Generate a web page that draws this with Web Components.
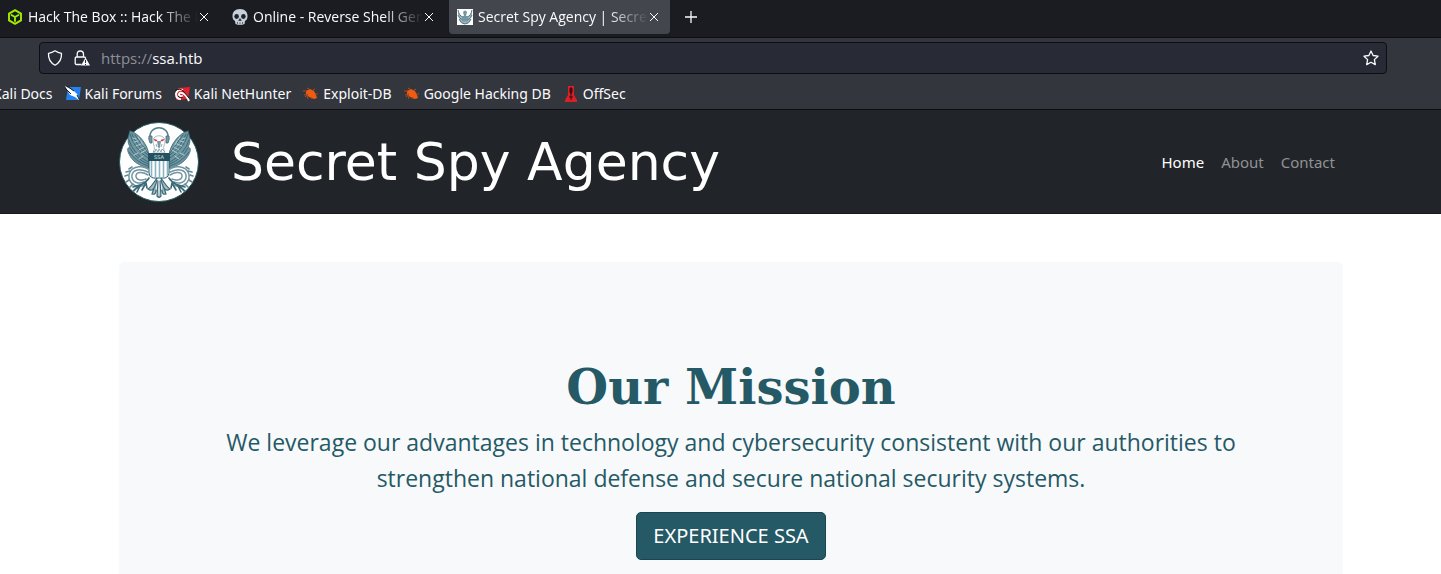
<!DOCTYPE html>
<html lang="en">
<head>
<meta charset="utf-8">
<title>Secret Spy Agency | Secret Security Service</title>
<style>
  body { margin: 0; font-family: "Noto Sans", sans-serif; }
</style>
</head>
<body>
<browser-window></browser-window>

<script>
const eagle = `
  <svg viewBox="0 0 80 80" aria-hidden="true">
    <defs>
      <g id="half" fill="none" stroke="#3a6977" stroke-linecap="round">
        <path d="M11 9C9 15 8 20 11 25C8 26 8 28 10 32C13 39 20 44 30 46V33C29 23 20 11 11 9Z" fill="#6f96a1" stroke-width=".8"/>
        <path d="M11 12Q15 27 29 36M13 12Q18 25 29 33M16 13Q22 21 29 31M10 18Q14 32 29 40M11 26Q17 37 29 42M10 30Q17 40 29 44" stroke-width="1"/>
        <path d="M14 16l3 1M15 20l4-1M17 24l5-2M20 28l5-3M22 31l5-3M15 33l4-2M20 37l4-3M22 19l2 4M19 15l2 3" stroke="#dbe7ea" stroke-width=".7"/>
        <path d="M29 47C20 42 11 46 10 53C9 61 17 67 26 63M29 50C20 46 14 48 13 53C12 59 18 63 25 60M29 53C22 49 17 50 17 54C17 58 22 59 27 57" stroke="#7195a0" stroke-width="1.500" stroke-dasharray="2 .6"/>
        <path d="M13 45l-3 2M11 49l-4 1M9 53l-3 1M10 58l-3 2M14 62l-3 3M18 65l-3 4" stroke="#648b97" stroke-width="1.600"/>
        <path d="M30 56C27 61 21 63 14 69M27 61l-4 7M24 62l-10 3M21 64l-3 6M27 61l1 5" stroke-width="1.600"/>
        <path d="M38 56C34 62 31 66 29 67C32 69 34 68 35 66M38 58C36 65 34 68 33 72C36 73 37 71 37 68M39 59L38 74Q40 76 40 75" fill="#a5bdc4" stroke-width="1.200"/>
      </g>
    </defs>
    <circle cx="40" cy="40" r="39.500" fill="#fff" stroke="#255966"/>
    <use href="#half"/><use href="#half" transform="matrix(-1 0 0 1 80 0)"/>
    <path d="M31 17C29 2 51 2 49 17" fill="none" stroke="#547f8b" stroke-width="1.500"/>
    <path d="M30 14h3v7h-2q-2-4-1-7M50 14h-3v7h2q2-4 1-7" fill="#7899a3" stroke="#3a6977" stroke-width=".8"/>
    <path d="M34 31C37 25 34 23 34 19C34 12 46 12 46 19C46 23 43 25 46 31Z" fill="#fff" stroke="#91a9b0" stroke-width=".8"/>
    <path d="M34 29l2 1 1-3 2 3 1-3 2 3 1-3 3 3M37 22l1 3M43 22l-1 3" fill="none" stroke="#7899a3" stroke-width=".8"/>
    <path d="M38 19h4l-1 6-1 2-1-2Z" fill="#7899a3"/>
    <path d="M35 17l3 1v1h-2zM45 17l-3 1v1h2z" fill="#e03b45" stroke="#e03b45" stroke-width=".4"/>
    <path d="M30 32h20v19q0 4-4 5H34q-4-1-4-5Z" fill="#fff" stroke="#2d5d6b"/>
    <path d="M32.500 39v16M36.500 39v17M40.500 39v17M44.500 39v17M48.500 39v15" stroke="#8ab4c4" stroke-width="1.600"/>
    <path d="M29 31h22v8H29Z" fill="#23515f"/>
    <text x="40" y="37" text-anchor="middle" font-family="DejaVu Sans, sans-serif" font-size="5" fill="#d6e4e8">SSA</text>
  </svg>`;

const icons = {
  cube: `<svg viewBox="0 0 16 16"><path d="M8 1.200L14 4.600V11.400L8 14.800L2 11.400V4.600ZM4.500 6L8 8L11.500 6M8 8V12" fill="none" stroke="#9fef00" stroke-width="1.900" stroke-linejoin="round" stroke-linecap="round"/></svg>`,
  skull: `<svg viewBox="0 0 16 16"><path d="M8 0C3 0 .5 3 .5 7C.5 9 1 11 3 12L3.500 15Q8 17 12.500 15L13 12C15 11 15.500 9 15.500 7C15.500 3 13 0 8 0Z" fill="#c5d0d8"/><ellipse cx="4.600" cy="7.500" rx="2.300" ry="2.400" fill="#1f2228"/><ellipse cx="11.400" cy="7.500" rx="2.300" ry="2.400" fill="#1f2228"/><path d="M8 9.500l-1.300 2h2.600zM5.500 13v2M8 13.200v2.400M10.500 13v2" fill="#1f2228" stroke="#1f2228" stroke-width=".6"/></svg>`,
  seal: `<svg viewBox="0 0 16 16"><path d="M0 0h16v16H0z" fill="#fff"/><path d="M1 1q1 6 5 7v3q-4-1-5-5M15 1q-1 6-5 7v3q4-1 5-5M2 10q2 5 6 5t6-5" fill="#9fb8c0" stroke="#4d7482"/><path d="M6 3q2-3 4 0l-1 4h2v5q-3 1-6 0V7h2z" fill="#7697a2"/></svg>`,
  forums: `<svg viewBox="0 0 16 16"><path d="M3 1h13l-2 13H1z" fill="#2382ef"/><path d="M0 0l9 5 3 3 3 7-5-4-5-2z" fill="#fff"/><path d="M0 2l6 6M2 0l7 5M12 9l3 6" stroke="#17191f" fill="none"/></svg>`,
  hunter: `<svg viewBox="0 0 16 16"><path d="M4 2l12-1-2 12-12 1z" fill="#e4212c"/><path d="M15 15Q12 8 8 7Q5 6 5 9Q6 11 9 10M9 4Q3 3 2 8Q2 13 7 13" fill="none" stroke="#fff" stroke-width="2"/><path d="M1 5q5-4 9 1l5 6M4 10q2 3 5 1" fill="none" stroke="#17191f"/></svg>`,
  bug: `<svg viewBox="0 0 16 16"><path d="M3 5l4-2 4 2 2 4 1 3-3 1-5-2-3-3z" fill="#ee5b12"/><path d="M1 9l4-1-3 3M4 10l1 3M10 4l2-1M12 8l3 0M6 3L4 2M8 11l1 2M0 5h4" fill="none" stroke="#b4481b"/></svg>`,
  offsec: `<svg viewBox="0 0 16 16"><path d="M5 0h6v9l3 5v2H2v-2l3-5z" fill="#dc1f26"/><path d="M7 2h2v4l-1 2-1-2zM8 8v6M6 11h4" fill="#321014" stroke="#321014"/></svg>`
};

function define(name, html, render, observed = []) {
  const template = document.createElement("template");
  template.innerHTML = html;
  customElements.define(name, class extends HTMLElement {
    static observedAttributes = observed;
    constructor() {
      super();
      this.attachShadow({ mode: "open" }).append(template.content.cloneNode(true));
    }
    connectedCallback() { if (render) render(this, this.shadowRoot); }
    attributeChangedCallback() { if (render) render(this, this.shadowRoot); }
  });
}

define("ui-icon", `
  <style>:host { display: block; width: 16px; height: 16px; flex: none; } svg { display: block; width: 16px; height: 16px; }</style>
  <div></div>`, (el, root) => { root.querySelector("div").innerHTML = icons[el.getAttribute("name")] || ""; }, ["name"]);

define("browser-tab", `
  <style>
    :host { display: flex; align-items: center; box-sizing: border-box; width: 221px; height: 34px; padding: 0 8px; gap: 5px; border-radius: 0 0 4px 4px; font: 14px "Open Sans", sans-serif; color: #fbfbfe; }
    :host([selected]) { background: #43464d; }
    .label { flex: 1; min-width: 0; overflow: hidden; white-space: nowrap; line-height: 24px; mask-image: linear-gradient(to left, transparent, #000 40px); }
    button { width: 20px; height: 20px; margin-right: -2px; margin-left: -9px; padding: 5px; border: 0; background: none; color: inherit; }
    svg { display: block; }
  </style>
  <ui-icon></ui-icon>
  <span class="label"><slot></slot></span>
  <button aria-label="Close tab"><svg width="10" height="10" viewBox="0 0 10 10"><path d="M1 1l8 8M9 1L1 9" stroke="currentColor"/></svg></button>
`, (el, root) => root.querySelector("ui-icon").setAttribute("name", el.getAttribute("icon")));

define("tab-strip", `
  <style>
    :host { display: flex; align-items: flex-start; gap: 4px; height: 37px; margin-left: -1px; background: #1b1c21; border-bottom: 1px solid #0d0d12; overflow: hidden; }
    button { width: 34px; height: 34px; padding: 11px; border: 0; background: none; color: #fbfbfe; }
    svg { display: block; }
  </style>
  <slot></slot>
  <button aria-label="New tab"><svg width="12" height="12" viewBox="0 0 12 12"><path d="M6 0v12M0 6h12" stroke="currentColor" stroke-width="1.300"/></svg></button>`);

define("address-bar", `
  <style>
    :host { display: flex; align-items: center; box-sizing: border-box; height: 32px; margin: 4px 54px 4px 39px; padding: 0 7px; border: 1px solid #0d0e14; border-radius: 4px; background: #282a36; color: #fbfbfe; }
    svg { display: block; flex: none; width: 16px; height: 16px; }
    .lock { margin: 0 11px; }
    .field { position: relative; flex: 1; display: flex; height: 24px; font: 15px/24px "Open Sans", sans-serif; }
    input { position: absolute; inset: 0; width: 100%; padding: 0; border: 0; outline: 0; background: none; color: transparent; font: inherit; }
    .url { color: #8f9097; white-space: pre; }
    b { font-weight: 400; color: #fbfbfe; }
    button { padding: 0; border: 0; background: none; color: inherit; }
  </style>
  <svg viewBox="0 0 16 16"><path d="M8 .8Q11 2.800 14.500 3.300Q15 11.500 8 15.200Q1 11.500 1.500 3.300Q5 2.800 8 .8Z" fill="none" stroke="currentColor" stroke-width="1.300" stroke-linejoin="round"/></svg>
  <svg class="lock" viewBox="0 0 16 16"><path d="M7.500 14.500H2.500Q1.200 14.500 1.200 13V8.500Q1.200 7 2.500 7H10Q11.500 7 11.500 8M3.200 7V4Q3.200 1 6.300 1T9.500 4V7" fill="none" stroke="currentColor" stroke-width="1.300"/><path d="M11.500 7.500L16 15.500H7Z" fill="currentColor"/><path d="M11.500 10v3M11.500 14v1" stroke="#282a36"/></svg>
  <div class="field"><span class="url">https://<b>ssa.htb</b></span><input aria-label="Address" type="text"></div>
  <button aria-label="Bookmark this page"><svg viewBox="0 0 16 16"><path d="M8 1l2.100 4.500 4.900.7-3.600 3.400.9 5L8 12.200l-4.300 2.400.9-5L1 6.200l4.900-.7Z" fill="none" stroke="currentColor" stroke-width="1.300" stroke-linejoin="round"/></svg></button>`);

define("bookmark-link", `
  <style>
    :host { display: block; flex: none; }
    a { display: flex; align-items: center; gap: 4px; color: #fbfbfe; text-decoration: none; font-size: 14px; line-height: 24px; white-space: nowrap; }
  </style>
  <a href="#"><ui-icon></ui-icon><slot></slot></a>
`, (el, root) => {
  const icon = root.querySelector("ui-icon");
  if (el.hasAttribute("icon")) icon.setAttribute("name", el.getAttribute("icon")); else icon.remove();
});

define("bookmarks-bar", `
  <style>:host { display: flex; gap: 12px; margin-left: -7px; padding: 4px 0 3px; }</style><slot></slot>`);

define("site-header", `
  <style>
    :host { display: flex; align-items: center; padding: 12px 98px 12px 119px; background: #212529; box-shadow: inset 0 -1px #1a171e; color: #fff; }
    .logo { width: 80px; height: 80px; flex: none; }
    .logo svg { display: block; }
    .brand { display: flex; align-items: center; gap: 32px; flex: 1; color: inherit; text-decoration: none; font: 52px/78px "DejaVu Sans", sans-serif; white-space: nowrap; }
    nav { display: flex; gap: 17px; padding-right: 8px; font: 15px/24px "Noto Sans", sans-serif; }
    nav a { color: #909294; text-decoration: none; }
    nav a[aria-current] { color: #fff; }
  </style>
  <a class="brand" href="#"><span class="logo">${eagle}</span>Secret Spy Agency</a>
  <nav><a href="#" aria-current="page">Home</a><a href="#">About</a><a href="#">Contact</a></nav>`);

define("mission-panel", `
  <style>
    :host { display: block; margin: 48px 98px 48px 119px; padding: 96px 96px; border-radius: 5px; background: #f8f9fb; color: #255966; text-align: center; }
    h1 { margin: 0 0 8px; font: bold 48px/58px "DejaVu Serif", serif; }
    p { margin: 0 0 16px; font: 23px/36px "Open Sans", sans-serif; }
    button { height: 48px; padding: 0 16px; border: 1px solid #1b4552; border-radius: 5px; background: #255966; color: #fff; font: 20px/30px "Noto Sans", sans-serif; }
  </style>
  <h1>Our Mission</h1>
  <p>We leverage our advantages in technology and cybersecurity consistent with our authorities to strengthen national defense and secure national security systems.</p>
  <button>EXPERIENCE SSA</button>`);

define("browser-window", `
  <style>
    :host { display: flex; flex-direction: column; height: 100vh; overflow: hidden; background: #fff; }
    .chrome { flex: none; background: #33363d; border-bottom: 1px solid #0d0d12; overflow: hidden; }
    main { flex: 1; min-height: 0; overflow: hidden; }
  </style>
  <div class="chrome">
    <tab-strip>
      <browser-tab icon="cube">Hack The Box :: Hack The Box</browser-tab>
      <browser-tab icon="skull">Online - Reverse Shell Generator</browser-tab>
      <browser-tab icon="seal" selected>Secret Spy Agency | Secret Security Service</browser-tab>
    </tab-strip>
    <address-bar></address-bar>
    <bookmarks-bar>
      <bookmark-link>Kali Docs</bookmark-link>
      <bookmark-link icon="forums">Kali Forums</bookmark-link>
      <bookmark-link icon="hunter">Kali NetHunter</bookmark-link>
      <bookmark-link icon="bug">Exploit-DB</bookmark-link>
      <bookmark-link icon="bug">Google Hacking DB</bookmark-link>
      <bookmark-link icon="offsec">OffSec</bookmark-link>
    </bookmarks-bar>
  </div>
  <main>
    <site-header></site-header>
    <mission-panel></mission-panel>
  </main>`);
</script>
</body>
</html>
